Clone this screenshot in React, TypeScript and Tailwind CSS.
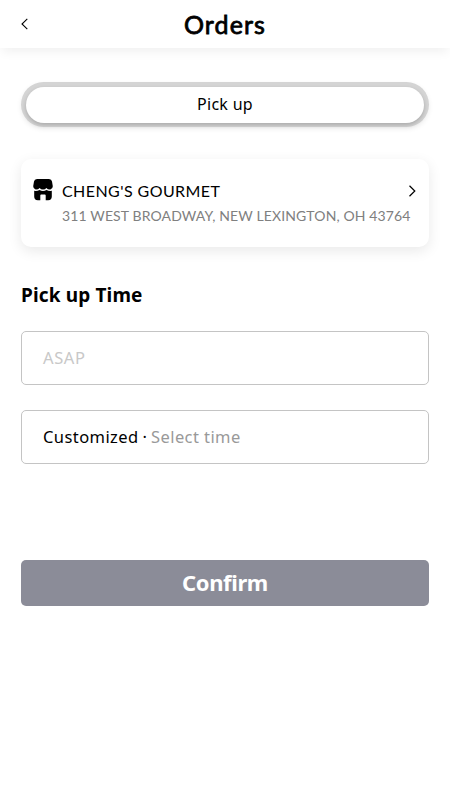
import React from "react";

function StoreIcon() {
  return (
    <svg
      width="20"
      height="22"
      viewBox="0 0 20 22"
      fill="black"
      className="shrink-0"
      aria-hidden="true"
    >
      <path d="M4 0H16Q18.6 0 19 2.5L19.8 7.2Q19.8 9.8 17.4 10.4Q15 10.6 13.3 8.9Q12.2 10.6 10 10.6Q7.8 10.6 6.7 8.9Q5 10.6 2.6 10.4Q.2 9.8 .2 7.2L1 2.5Q1.4 0 4 0Z" />
      <path d="M1.2 11.8Q4.3 12.2 6.5 10.9Q10 12.9 13.5 10.9Q15.8 12.2 18.8 11.8V17.5Q18.8 21.2 15.2 21.2H12.7V16.5Q12.7 15.6 11.8 15.6H8.2Q7.3 15.6 7.3 16.5V21.2H4.8Q1.2 21.2 1.2 17.5Z" />
    </svg>
  );
}

function Header() {
  return (
    <header className="grid h-12 grid-cols-[48px_1fr_48px] items-center bg-white shadow-[0_6px_10px_-2px_rgba(0,0,0,0.06)]">
      <button type="button" aria-label="Back" className="pl-[21px]">
        <svg
          width="8"
          height="12"
          viewBox="0 0 8 12"
          fill="none"
          stroke="black"
          strokeWidth="1.1"
        >
          <path d="M6.3.8L1 6L6.3 11.2" />
        </svg>
      </button>
      <h1 className="text-center font-['Lato'] text-[25px] leading-12 tracking-[1.1px] [-webkit-text-stroke:0.8px_black]">
        <span className="inline-block">Orders</span>
      </h1>
    </header>
  );
}

export default function App() {
  return (
    <div className="min-h-screen bg-white font-['Noto_Sans',sans-serif] text-black">
      <Header />

      <main className="px-[21px] pt-[34px]">
        <div className="h-[45px] rounded-full bg-[#d4d4d4] p-[5px] shadow-[0_2px_5px_rgba(0,0,0,0.08)]">
          <button
            type="button"
            className="flex h-9 w-full items-center justify-center rounded-full bg-white pb-0.5 text-base tracking-[0.3px] shadow-[0_2px_4px_rgba(0,0,0,0.2)]"
          >
            Pick up
          </button>
        </div>

        <section className="mt-8 h-[88px] rounded-[10px] bg-white pt-5 pr-[13px] pl-3 shadow-[0_4px_14px_rgba(0,0,0,0.09)]">
          <div className="flex items-start">
            <StoreIcon />
            <div className="ml-[9px] min-w-0 flex-1 font-['Lato'] whitespace-nowrap">
              <h2 className="text-base leading-6 tracking-[0.43px]">
                CHENG'S GOURMET
              </h2>
              <p className="text-sm leading-[26px] tracking-[0.13px] text-[#808080]">
                311 WEST BROADWAY, NEW LEXINGTON, OH 43764
              </p>
            </div>
            <svg
              width="8"
              height="12"
              viewBox="0 0 8 12"
              fill="none"
              stroke="black"
              strokeWidth="1.2"
              className="mt-1.5 shrink-0"
            >
              <path d="M1.5.8L6.8 6L1.5 11.2" />
            </svg>
          </div>
        </section>

        <h2 className="mt-9 text-[19px] leading-[25px] font-bold tracking-[0.15px]">
          Pick up Time
        </h2>

        <button
          type="button"
          className="mt-[23px] flex h-[54px] w-full items-center rounded-[5px] border border-[#c4c4c4] pl-[21px] text-[16.5px] tracking-[0.6px] text-[#c8c8c8]"
        >
          ASAP
        </button>

        <button
          type="button"
          className="mt-[25px] flex h-[54px] w-full items-center gap-1 rounded-[5px] border border-[#c4c4c4] pl-[21px] text-[16.5px] tracking-[0.42px]"
        >
          <span>Customized</span>
          <span className="tracking-normal">·</span>
          <span className="text-[#999]">Select time</span>
        </button>

        <button
          type="button"
          className="mt-24 flex h-[46px] w-full items-center justify-center rounded-[5px] bg-[#8b8c98] pb-px text-[22px] font-bold tracking-[-0.4px] text-white"
        >
          Confirm
        </button>
      </main>
    </div>
  );
}
